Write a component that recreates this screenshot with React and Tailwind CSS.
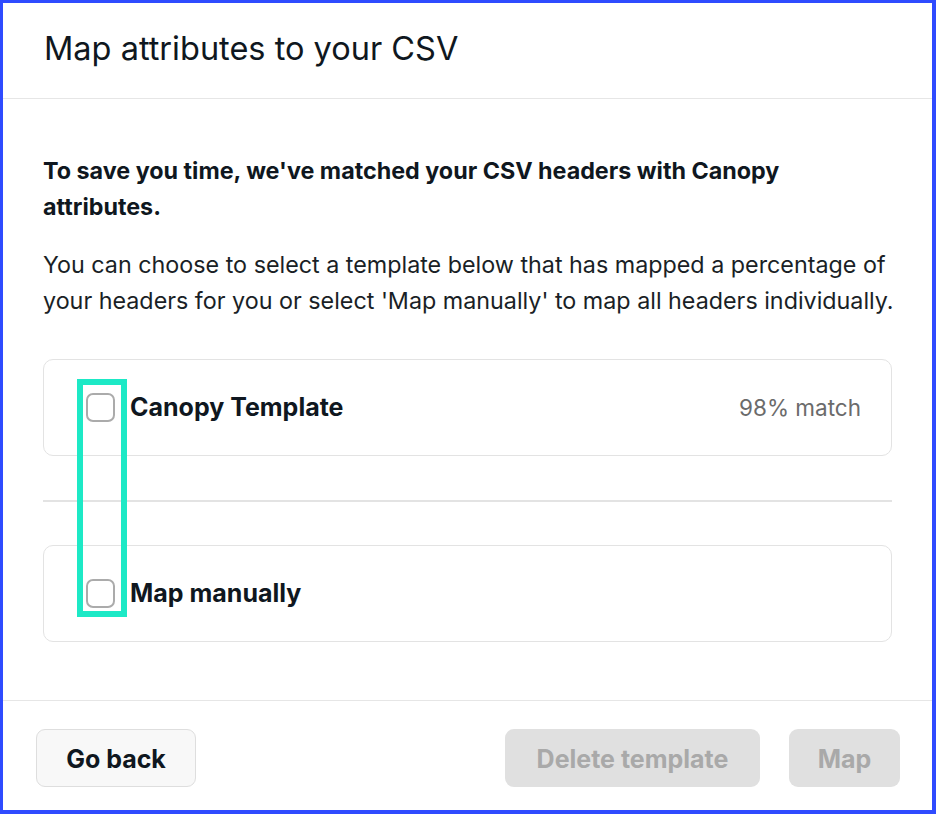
import React, { useState } from "react";

function Checkbox({ checked, onChange }) {
  return (
    <button
      type="button"
      onClick={onChange}
      className={`w-[29px] h-[29px] shrink-0 rounded-[7px] border-2 ${checked ? "border-[#111827] bg-[#111827]" : "border-[#ababab] bg-white"}`}
    />
  );
}

function OptionCard({ label, match, checked, onToggle }) {
  return (
    <div className="flex items-center h-[97px] rounded-[10px] border border-[#e3e3e3] pl-[42px] pr-[30px]">
      <Checkbox checked={checked} onChange={onToggle} />
      <div className="ml-[15px] text-[25px] font-bold text-[#0f1720]">{label}</div>
      {match && <div className="ml-auto text-[22.5px] text-[#6b6b6b]">{match}</div>}
    </div>
  );
}

export default function App() {
  const [selected, setSelected] = useState(null);

  return (
    <div
      className="relative flex flex-col h-[814px] bg-white border-[#2f4bff] border-t-[3px] border-l-[3px] border-r-4 border-b-4"
      style={{ fontFamily: "Inter, 'Liberation Sans', sans-serif" }}
    >
      <div className="flex items-center h-[96px] pb-[2px] px-[41px] border-b border-[#e6e6e6]">
        <h1 className="text-[32.5px] text-[#0f1720] font-normal">Map attributes to your CSV</h1>
      </div>

      <div className="flex-1 px-[40px] pt-[54px]">
        <p className="text-[23.3px] leading-[36px] font-bold text-[#0f1720]">
          To save you time, we've matched your CSV headers with Canopy attributes.
        </p>
        <p className="mt-[22px] mr-[-20px] text-[23.3px] leading-[36px] text-[#1a1f26]">
          You can choose to select a template below that has mapped a percentage of your headers for you or select 'Map manually' to map all headers individually.
        </p>

        <div className="mt-[40px]">
          <OptionCard
            label="Canopy Template"
            match="98% match"
            checked={selected === "template"}
            onToggle={() => setSelected(selected === "template" ? null : "template")}
          />
        </div>
        <div className="mt-[44px] mb-[43px] border-t-2 border-[#e3e3e3]" />
        <OptionCard
          label="Map manually"
          checked={selected === "manual"}
          onToggle={() => setSelected(selected === "manual" ? null : "manual")}
        />
      </div>

      <div className="flex items-center h-[110px] pl-[33px] pr-[32px] pb-[23px] pt-[28px] border-t border-[#e6e6e6]">
        <button className="h-[58px] w-[160px] pt-[3px] rounded-[9px] border border-[#dedede] bg-[#f8f8f8] text-[25px] font-bold text-[#0f1720]">
          Go back
        </button>
        <button disabled className="ml-auto h-[58px] w-[255px] pt-[3px] rounded-[9px] bg-[#e0e0e0] text-[25px] font-bold text-[#a9a9a9]">
          Delete template
        </button>
        <button disabled className="ml-[29px] h-[58px] w-[111px] pt-[3px] rounded-[9px] bg-[#e0e0e0] text-[25px] font-bold text-[#a9a9a9]">
          Map
        </button>
      </div>

      <div className="absolute left-[74px] top-[376px] w-[50px] h-[238px] border-[6px] border-[#1de9c6] pointer-events-none" />
    </div>
  );
}
